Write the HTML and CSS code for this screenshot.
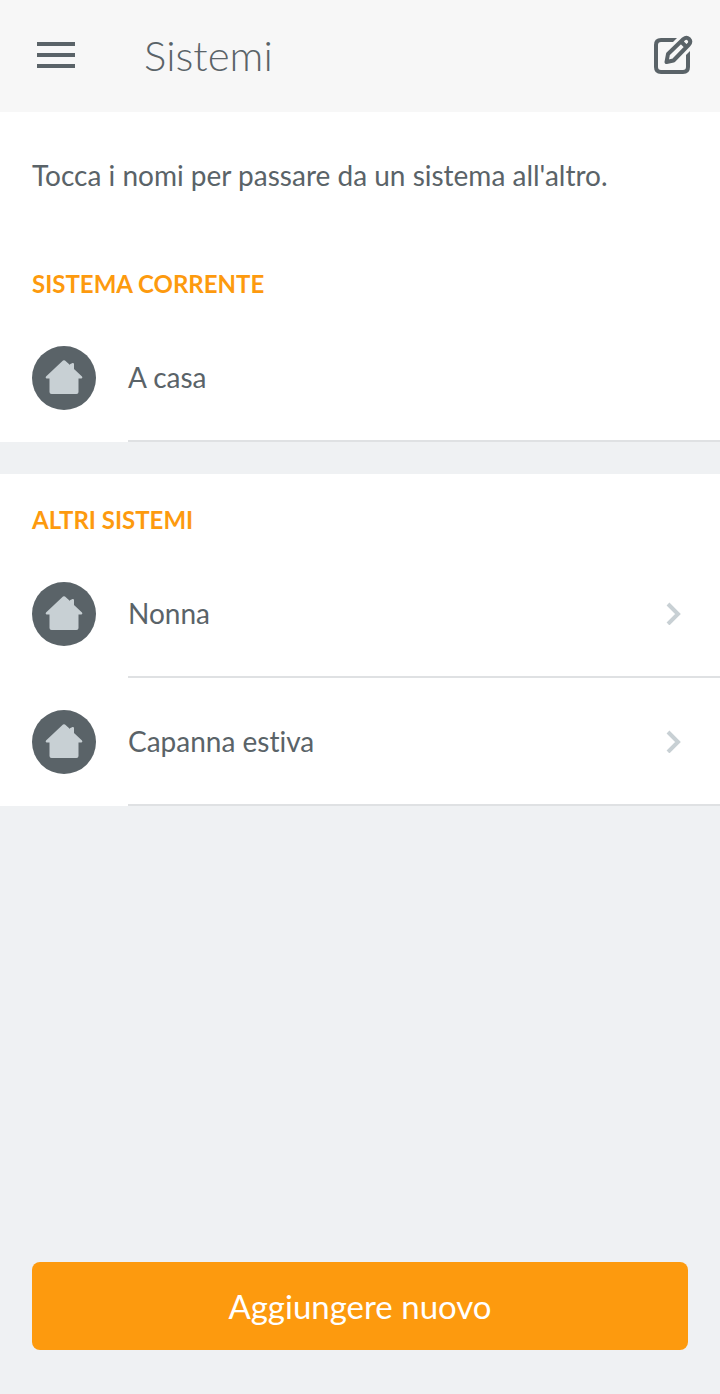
FILE: index.html
```html
<!DOCTYPE html>
<html lang="it">
<head>
<meta charset="utf-8">
<meta name="viewport" content="width=device-width, initial-scale=1">
<title>Sistemi</title>
<link rel="stylesheet" href="styles.css">
</head>
<body>
<svg class="defs" aria-hidden="true">
  <symbol id="house" viewBox="0 0 64 64">
    <circle cx="32" cy="32" r="32" fill="#5a6368"/>
    <path d="M31 14.600Q32 13.800 33 14.600L38 19V18.500Q38 17.800 39 17.800L40.500 17Q42 16.800 42 18V23L50 30.500Q51 32 49.500 32.500H46.500V46Q46.500 48 44.500 48H19.500Q17.500 48 17.500 46V32.500H14.500Q13 32 14 30.500Z" fill="#c8d0d4"/>
  </symbol>
  <symbol id="chevron" viewBox="0 0 16 24">
    <path d="M2 3L12 13L2 23" fill="none" stroke="#c8d0d4" stroke-width="4"/>
  </symbol>
</svg>
<header class="topbar">
  <button class="icon-button" type="button" aria-label="Menu">
    <svg class="menu-icon" viewBox="0 0 38 26"><path d="M0 2H38M0 13H38M0 24H38" stroke="#5a6368" stroke-width="4"/></svg>
  </button>
  <h1 class="title">Sistemi</h1>
  <button class="icon-button" type="button" aria-label="Modifica">
    <svg class="edit-icon" viewBox="0 0 40 40" fill="none" stroke="#5a6368" stroke-width="4" stroke-linejoin="round"><path d="M20 5H8Q3 5 3 10V32Q3 37 8 37H30Q35 37 35 32V20"/><path d="M20 3H24L20 7ZM37 16V20H33Z" fill="#5a6368" stroke="none"/><path d="M13.500 27L15 19L30.500 4Q33.500 1.500 36 4Q38.500 6.500 36 9.500L20.500 25.500ZM28 6.500L33.500 12"/></svg>
  </button>
</header>
<main class="content">
  <section class="panel">
    <p class="hint">Tocca i nomi per passare da un sistema all'altro.</p>
    <h2 class="heading">SISTEMA CORRENTE</h2>
    <div class="row"><svg class="avatar" aria-hidden="true"><use href="#house"/></svg><div class="row-body"><span>A casa</span></div></div>
  </section>
  <section class="panel">
    <h2 class="heading">ALTRI SISTEMI</h2>
    <button class="row" type="button"><svg class="avatar" aria-hidden="true"><use href="#house"/></svg><span class="row-body"><span>Nonna</span><svg class="chevron" aria-hidden="true"><use href="#chevron"/></svg></span></button>
    <button class="row" type="button"><svg class="avatar" aria-hidden="true"><use href="#house"/></svg><span class="row-body"><span>Capanna estiva</span><svg class="chevron" aria-hidden="true"><use href="#chevron"/></svg></span></button>
  </section>
</main>
<footer class="footer"><button class="add" type="button">Aggiungere nuovo</button></footer>
</body>
</html>
```

FILE: styles.css
```css
* { box-sizing: border-box; }
body {
  margin: 0;
  min-height: 100vh;
  display: flex;
  flex-direction: column;
  background: #eff1f3;
  color: #5a6368;
  font: 400 28px/36px Lato, sans-serif;
  font-variant-ligatures: none;
}
button { border: 0; padding: 0; background: none; color: inherit; font: inherit; text-align: left; cursor: pointer; }
svg { display: block; flex: none; }
.defs { position: absolute; width: 0; height: 0; }
.topbar { display: flex; align-items: center; height: 112px; padding: 0 27px 2px 37px; background: #f7f7f7; }
.menu-icon { width: 38px; height: 26px; }
.edit-icon { width: 40px; height: 40px; }
.title { flex: 1; margin: 0 0 0 69px; font-size: 42px; line-height: 48px; font-weight: 300; }
.content { flex: 1; display: flex; flex-direction: column; gap: 32px; }
.panel { background: #fff; }
.hint { margin: 0; padding: 45px 32px; }
.heading { margin: 0; padding: 30px 32px 14px; font-size: 24px; line-height: 32px; font-weight: 700; color: #fd9a0e; }
.row { display: flex; align-items: center; gap: 32px; width: 100%; padding-left: 32px; }
.row-body { flex: 1; display: flex; align-items: center; justify-content: space-between; height: 128px; padding-right: 38px; border-bottom: 2px solid #dfe1e3; }
.avatar { width: 64px; height: 64px; }
.chevron { width: 16px; height: 24px; overflow: visible; }
.footer { padding: 0 32px 44px; }
.add { display: block; width: 100%; height: 88px; border-radius: 8px; background: #fd9a0e; color: #fff; font-size: 33px; text-align: center; }
```
